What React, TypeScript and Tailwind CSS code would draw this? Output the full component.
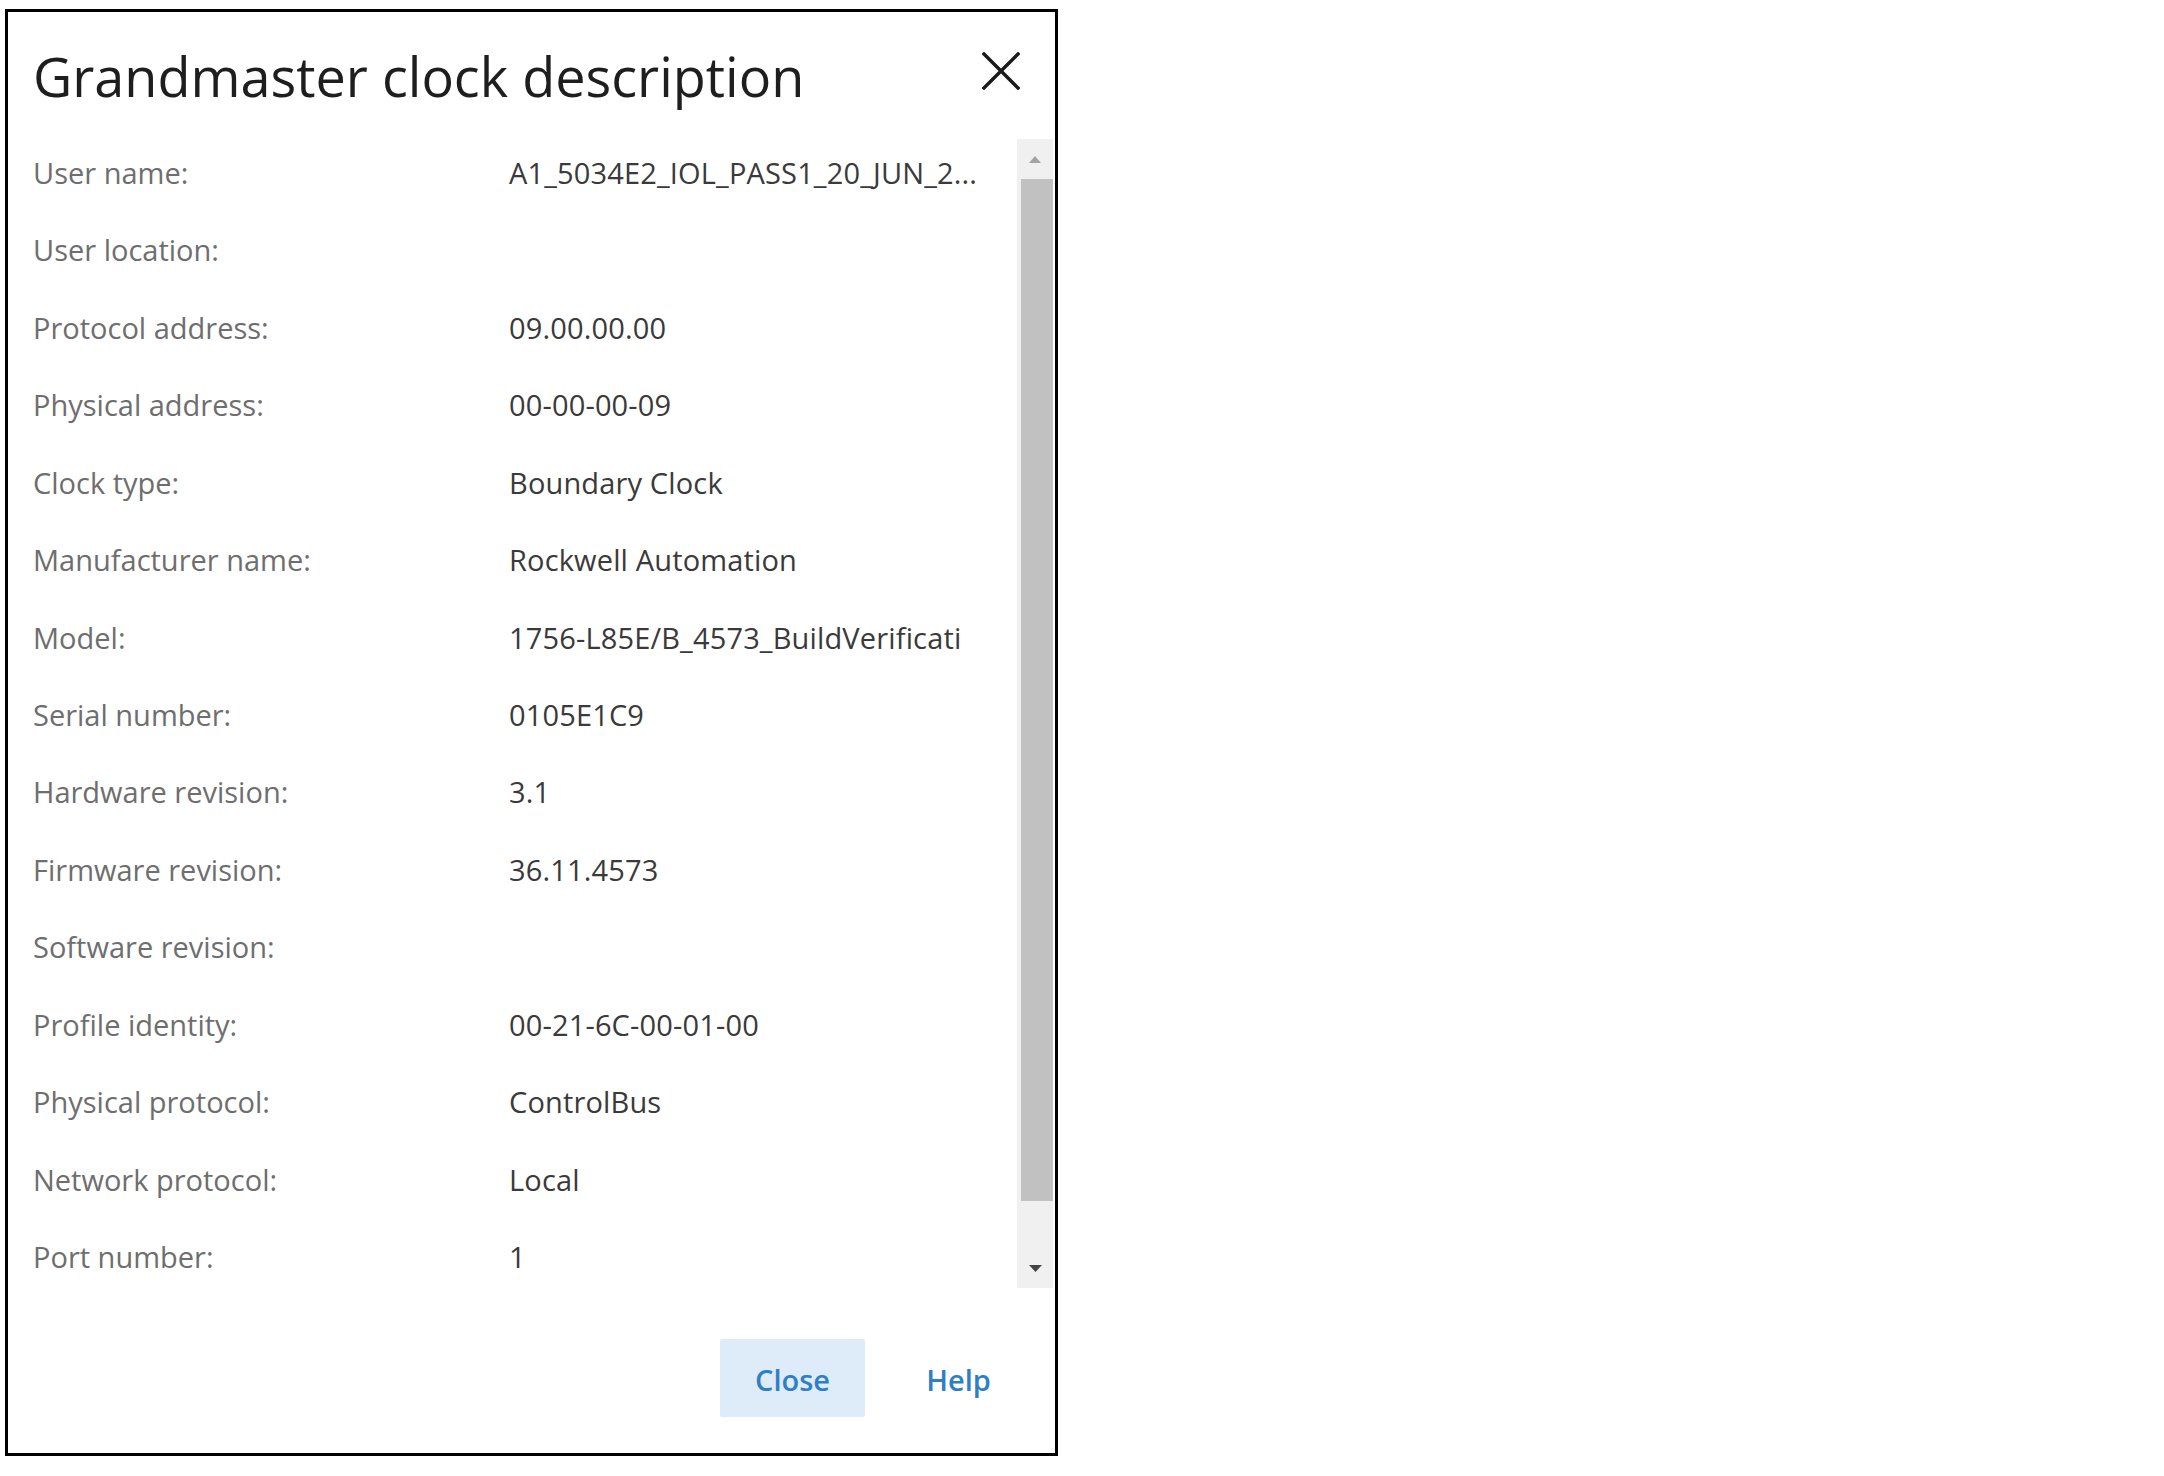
const rows: { label: string; value: string }[] = [
  { label: "User name:", value: "A1_5034E2_IOL_PASS1_20_JUN_2..." },
  { label: "User location:", value: "" },
  { label: "Protocol address:", value: "09.00.00.00" },
  { label: "Physical address:", value: "00-00-00-09" },
  { label: "Clock type:", value: "Boundary Clock" },
  { label: "Manufacturer name:", value: "Rockwell Automation" },
  { label: "Model:", value: "1756-L85E/B_4573_BuildVerificati" },
  { label: "Serial number:", value: "0105E1C9" },
  { label: "Hardware revision:", value: "3.1" },
  { label: "Firmware revision:", value: "36.11.4573" },
  { label: "Software revision:", value: "" },
  { label: "Profile identity:", value: "00-21-6C-00-01-00" },
  { label: "Physical protocol:", value: "ControlBus" },
  { label: "Network protocol:", value: "Local" },
  { label: "Port number:", value: "1" },
];

const Scrollbar = () => (
  <div className="w-[36px] h-full bg-[#f0f0f0] flex flex-col shrink-0">
    <div className="h-[40px] flex items-center justify-center">
      <svg width="12" height="7" viewBox="0 0 12 7">
        <path d="M6 0 L12 7 L0 7 Z" fill="#a3a3a3" />
      </svg>
    </div>
    <div className="h-[1022px] ml-[4px] bg-[#c1c1c1]" />
    <div className="flex-1" />
    <div className="h-[40px] flex items-center justify-center">
      <svg width="13" height="7" viewBox="0 0 13 7">
        <path d="M0 0 L13 0 L6.5 7 Z" fill="#444444" />
      </svg>
    </div>
  </div>
);

export default function App() {
  return (
    <div className="w-[2164px] h-[1476px] bg-white pl-[5px] pt-[9px] font-['Open_Sans',sans-serif]">
      <div className="w-[1053px] h-[1447px] border-[3px] border-black flex flex-col">
        {/* header */}
        <div className="h-[127px] flex items-center justify-between pl-[25px] pr-[35px]">
          <h1 className="text-[54px] leading-none text-[#1e1e1e] font-normal">
            Grandmaster clock description
          </h1>
          <button className="-mt-[10px]">
            <svg width="38" height="38" viewBox="0 0 38 38">
              <path d="M2 2 L36 36 M36 2 L2 36" stroke="#1a1a1a" strokeWidth="3.4" strokeLinecap="square" />
            </svg>
          </button>
        </div>

        {/* body */}
        <div className="h-[1149px] flex pr-[2px]">
          <div className="flex-1 overflow-hidden">
            <div className="-mt-[5px] pl-[25px]">
              {rows.map((row) => (
                <div key={row.label} className="h-[77.45px] flex items-center text-[29px]">
                  <span className="w-[476px] shrink-0 text-[#6e6e6e]">{row.label}</span>
                  <span className="text-[#3a3a3a] whitespace-nowrap tracking-[0.15px]">{row.value}</span>
                </div>
              ))}
            </div>
          </div>
          <Scrollbar />
        </div>

        {/* footer */}
        <div className="flex-1 flex justify-end items-start pt-[51px] pr-[24px] gap-[21px]">
          <button className="w-[145px] h-[78px] pt-[4px] bg-[#deebf8] rounded-[2px] text-[29px] font-semibold text-[#2f7fc4]">
            Close
          </button>
          <button className="w-[145px] h-[78px] pt-[4px] text-[29px] font-semibold text-[#2f7fc4]">
            Help
          </button>
        </div>
      </div>
    </div>
  );
}
